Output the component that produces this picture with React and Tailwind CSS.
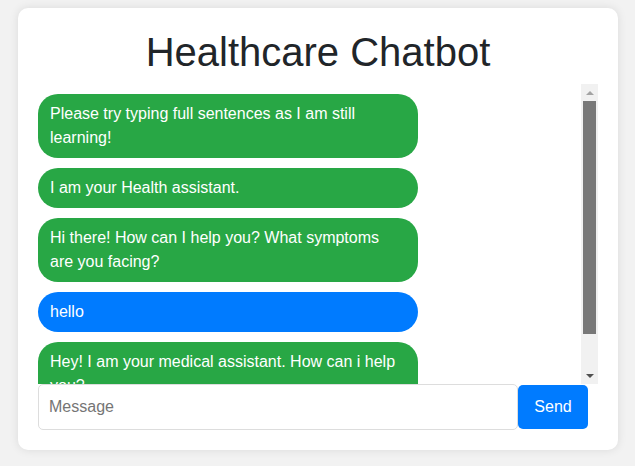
import React from 'react';

const messages = [
  { from: 'bot', text: 'Please try typing full sentences as I am still learning!' },
  { from: 'bot', text: 'I am your Health assistant.' },
  { from: 'bot', text: 'Hi there! How can I help you? What symptoms are you facing?' },
  { from: 'user', text: 'hello' },
  { from: 'bot', text: 'Hey! I am your medical assistant. How can i help you?' },
];

const App = () => {
  return (
    <div className="min-h-[466px] w-full bg-[#f2f2f2] pt-2 pl-[18px] font-['Liberation_Sans',Arial,sans-serif]">
      <div className="w-[600px] h-[442px] bg-white rounded-[10px] shadow-[0_0_10px_rgba(0,0,0,0.1)] p-5 flex flex-col">
        {/* Title */}
        <h1 className="text-[40px] leading-[48px] mb-2 text-center text-[#212529] font-normal">Healthcare Chatbot</h1>

        {/* Messages + scrollbar */}
        <div className="h-[300px] flex">
          <div className="w-[543px] overflow-hidden pt-2.5 flex flex-col gap-2.5">
            {messages.map((m, i) => (
              <div
                key={i}
                className={`w-[380px] shrink-0 rounded-[20px] px-3 py-2 text-white text-base leading-6 ${m.from === 'user' ? 'bg-[#007bff]' : 'bg-[#28a745]'}`}
              >
                {m.text}
              </div>
            ))}
          </div>
          <div className="w-[17px] h-full bg-[#f1f1f1] flex flex-col items-center">
            <div className="h-[17px] w-full flex items-center justify-center">
              <div className="w-0 h-0 border-l-[4px] border-r-[4px] border-b-[4px] border-l-transparent border-r-transparent border-b-[#a3a3a3]" />
            </div>
            <div className="w-[13px] h-[233px] bg-[#787878]" />
            <div className="flex-1" />
            <div className="h-[17px] w-full flex items-center justify-center">
              <div className="w-0 h-0 border-l-[4px] border-r-[4px] border-t-[4px] border-l-transparent border-r-transparent border-t-[#505050]" />
            </div>
          </div>
        </div>

        {/* Input row */}
        <div className="flex items-center">
          <input
            type="text"
            placeholder="Message"
            className="w-[480px] h-[46px] border border-[#ddd] rounded-[5px] px-2.5 text-base text-[#212529] placeholder:text-[#757575] outline-none"
          />
          <button className="w-[70px] h-[44px] bg-[#007bff] text-white text-base rounded-[5px]">Send</button>
        </div>
      </div>
    </div>
  );
};

export default App;
